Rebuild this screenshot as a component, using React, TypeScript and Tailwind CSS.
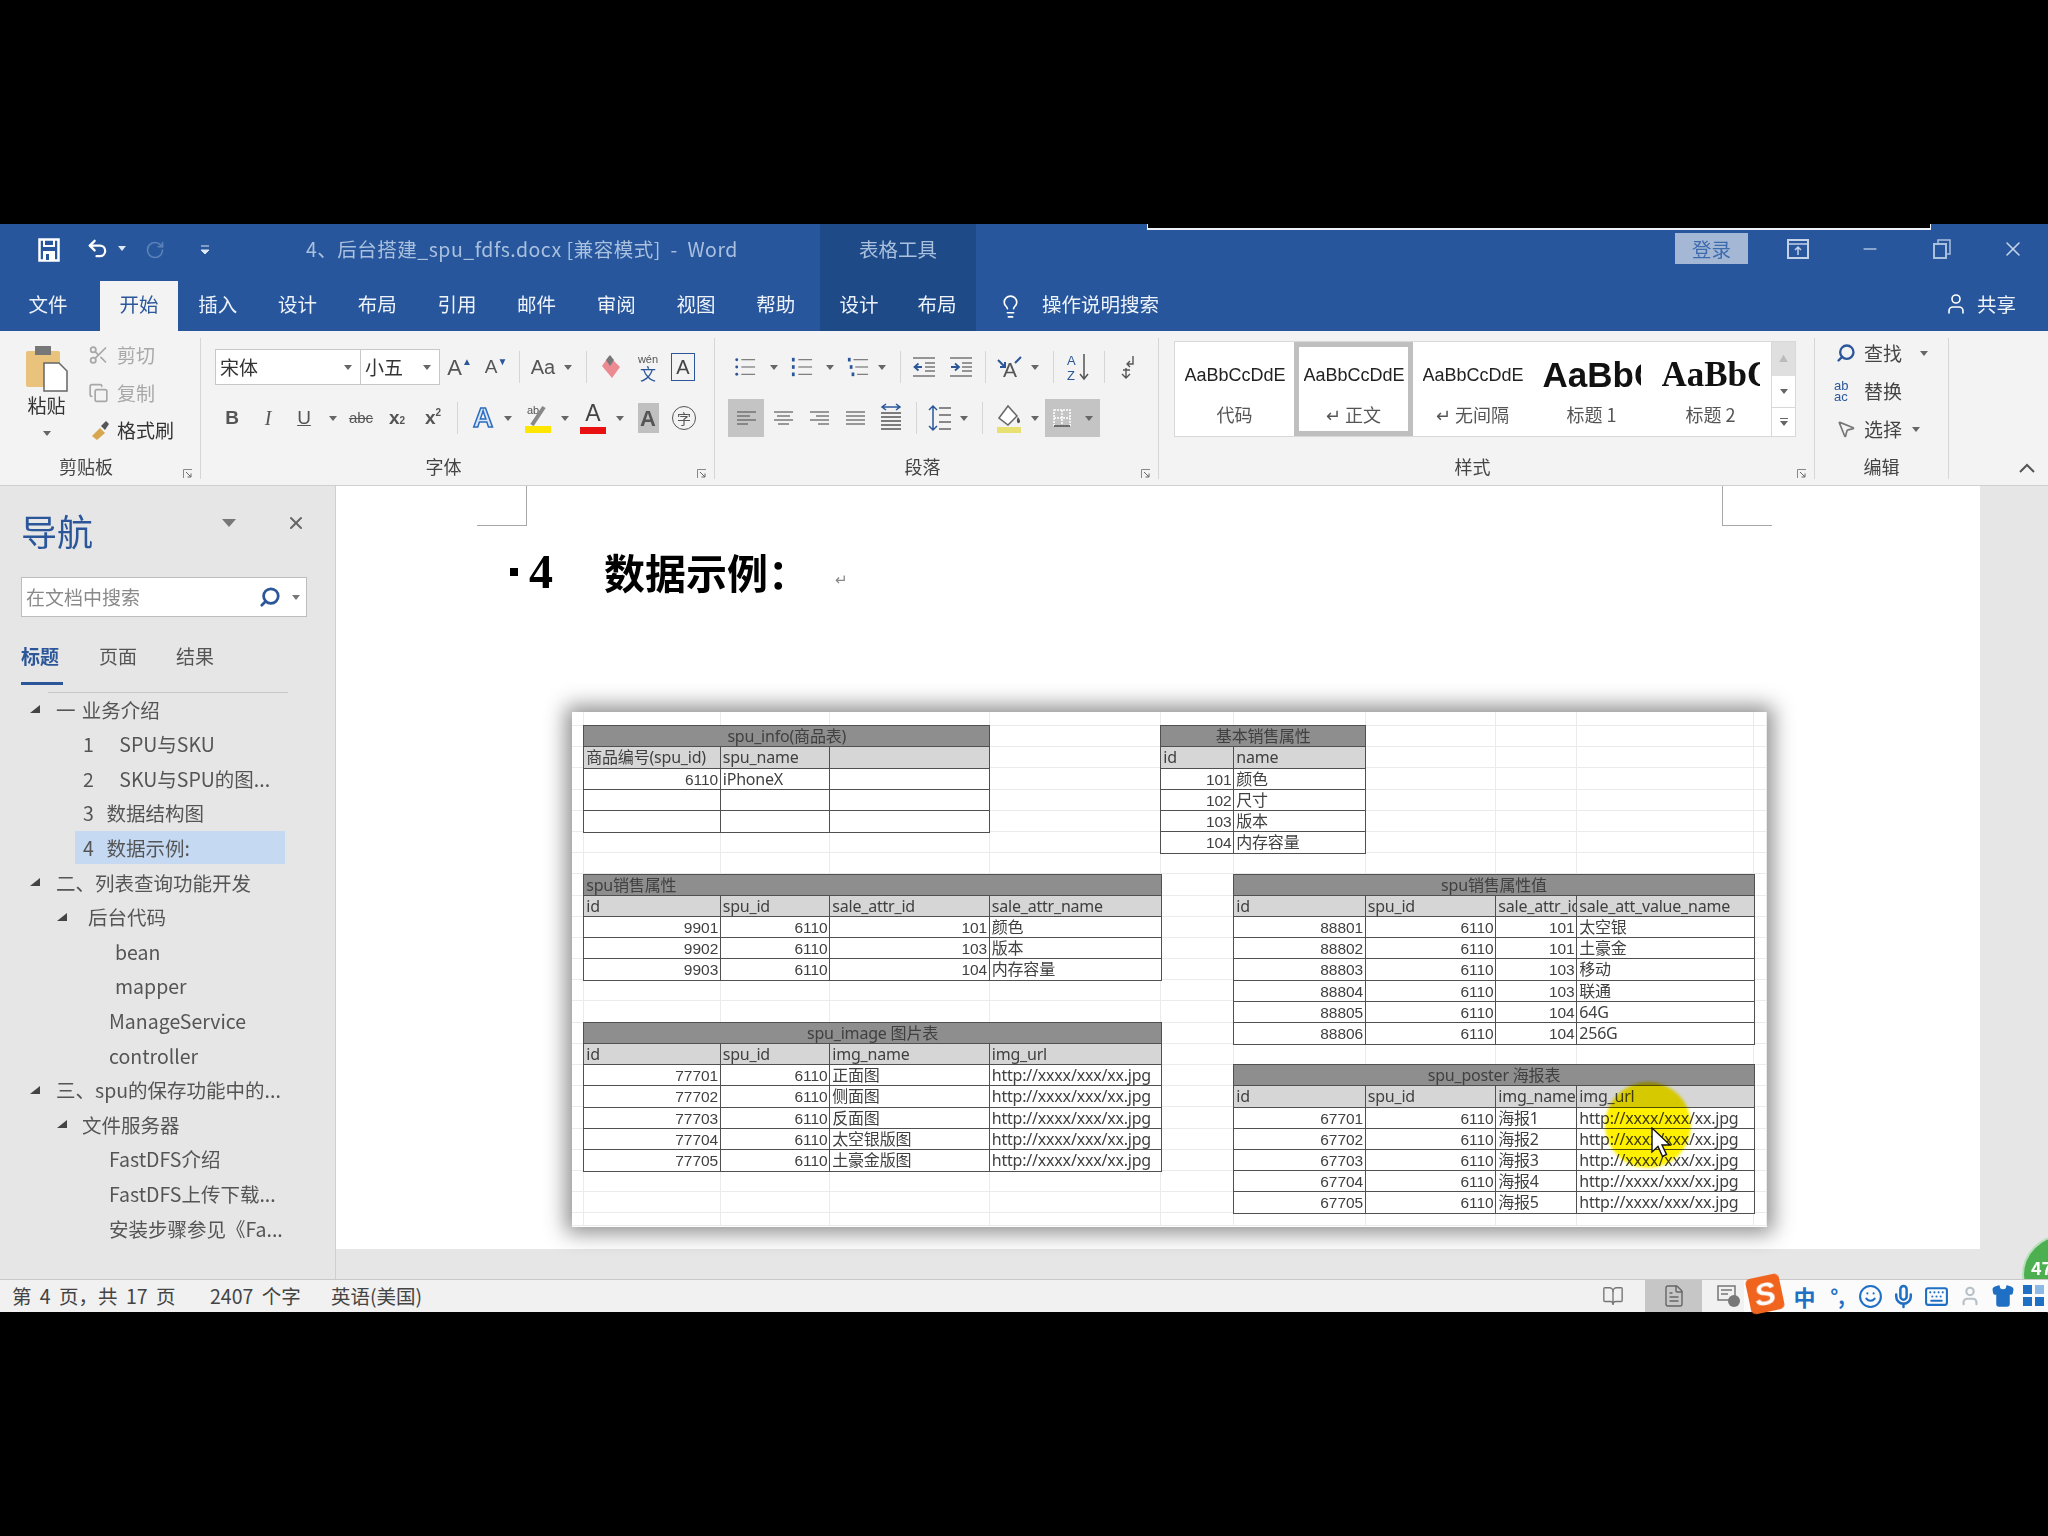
import React from "react";
import { BookOpen, Copy, FileText, Keyboard, Lightbulb, Mic, Minus, MousePointer2, RotateCw, Scissors, Search, Shirt, Smile, Undo2, User, X } from "lucide-react";

const S = ({ c = "", children }: { c?: string; children?: React.ReactNode }) => (
  <div className={"flex items-center justify-center shrink-0 h-full " + c}>{children}</div>
);
const Caret = ({ color = "#666" }: { color?: string }) => (
  <svg width="8" height="5" viewBox="0 0 8 5" className="shrink-0"><path d="M0 0h8L4 5z" fill={color} /></svg>
);
const Sep = () => <div className="w-px h-[32px] bg-[#d6d6d6]" />;
const Launcher = () => (
  <svg width="10" height="10" viewBox="0 0 10 10" className="absolute right-[7px] bottom-[0px]">
    <path d="M0.5 9V0.5H9" fill="none" stroke="#888" />
    <path d="M3 3l5 5M8 4.5V8H4.5" fill="none" stroke="#666" />
  </svg>
);
const Group = ({ c, label, launcher = true, labelC = "pr-[28px]", bodyC = "", children }: { c: string; label: string; launcher?: boolean; labelC?: string; bodyC?: string; children: React.ReactNode }) => (
  <div className={"relative flex flex-col shrink-0 h-[141px] border-r border-[#d6d6d6] " + c}>
    <div className={"flex-1 min-h-0 " + bodyC}>{children}</div>
    <div className={"h-[20px] pb-[5px] flex items-center justify-center text-[18px] text-[#444] " + labelC}>{label}</div>
    {launcher && <Launcher />}
  </div>
);
const Lines = ({ kind }: { kind: "l" | "c" | "r" | "j" }) => {
  const ys = [2, 6, 10, 14];
  const geo: Record<string, [number, number][]> = {
    l: [[1, 20], [1, 14], [1, 20], [1, 12]],
    c: [[1, 20], [4, 17], [1, 20], [5, 16]],
    r: [[1, 20], [7, 20], [1, 20], [9, 20]],
    j: [[1, 20], [1, 20], [1, 20], [1, 20]],
  };
  return (
    <svg width="21" height="16" viewBox="0 0 21 16">
      {ys.map((y, i) => (
        <path key={y} d={`M${geo[kind][i][0]} ${y}H${geo[kind][i][1]}`} stroke="#666" strokeWidth="1.3" />
      ))}
    </svg>
  );
};
const ListIco = ({ n }: { n: number }) => (
  <svg width="22" height="24" viewBox="0 0 24 24">
    {[4, 12, 20].map((y, i) => (
      <g key={y}>
        {n === 0 ? <circle cx="3" cy={y} r="1.6" fill="#2b579a" /> : <rect x={n === 2 ? i * 2 + 1 : 1} y={y - 2} width="3" height="4" fill="#2b579a" />}
        <path d={`M${n === 2 ? i * 2 + 7 : 8} ${y}H23`} stroke="#777" strokeWidth="1.3" />
      </g>
    ))}
  </svg>
);
const Indent = ({ flip }: { flip?: boolean }) => (
  <svg width="24" height="22" viewBox="0 0 24 22">
    <path d="M1 2h22M13 7h10M13 11h10M13 15h10M1 20h22" stroke="#777" strokeWidth="1.4" />
    <path d={flip ? "M2 11h7M6 7.500l4 3.500-4 3.500" : "M10 11H3M6.500 7.500L2.500 11l4 3.500"} stroke="#2b579a" strokeWidth="1.8" fill="none" />
  </svg>
);

const SmallSample = () => (
  <div className="w-[100px] overflow-hidden whitespace-nowrap text-[18px] leading-[24px] text-[#222] font-['Liberation_Sans',sans-serif]">AaBbCcDdEe</div>
);
const StyleItem = ({ sample, label, selected }: { sample: React.ReactNode; label: string; selected?: boolean }) => (
  <div className={"w-[119px] h-full shrink-0 flex flex-col items-center " + (selected ? "border-[5px] border-[#bfbfbf]" : "border-[5px] border-transparent")}>
    <div className="h-[54px] mt-[1px] flex items-center justify-center">{sample}</div>
    <div className="h-[24px] flex items-center text-[18px] text-[#555]">{label}</div>
  </div>
);

type Tbl = { col: number; row: number; title: string; left?: boolean; span: number; header: string[]; rows: string[][] };
const url = "http://xxxx/xxx/xx.jpg";
const tables: Tbl[] = [
  { col: 2, row: 2, span: 3, title: "spu_info(商品表)", header: ["商品编号(spu_id)", "spu_name", ""], rows: [["6110", "iPhoneX", ""], ["", "", ""], ["", "", ""]] },
  { col: 6, row: 2, span: 2, title: "基本销售属性", header: ["id", "name"], rows: [["101", "颜色"], ["102", "尺寸"], ["103", "版本"], ["104", "内存容量"]] },
  { col: 2, row: 9, span: 4, left: true, title: "spu销售属性", header: ["id", "spu_id", "sale_attr_id", "sale_attr_name"], rows: [["9901", "6110", "101", "颜色"], ["9902", "6110", "103", "版本"], ["9903", "6110", "104", "内存容量"]] },
  { col: 7, row: 9, span: 4, title: "spu销售属性值", header: ["id", "spu_id", "sale_attr_id", "sale_att_value_name"], rows: [["88801", "6110", "101", "太空银"], ["88802", "6110", "101", "土豪金"], ["88803", "6110", "103", "移动"], ["88804", "6110", "103", "联通"], ["88805", "6110", "104", "64G"], ["88806", "6110", "104", "256G"]] },
  { col: 2, row: 16, span: 4, title: "spu_image 图片表", header: ["id", "spu_id", "img_name", "img_url"], rows: [["77701", "6110", "正面图", url], ["77702", "6110", "侧面图", url], ["77703", "6110", "反面图", url], ["77704", "6110", "太空银版图", url], ["77705", "6110", "土豪金版图", url]] },
  { col: 7, row: 18, span: 4, title: "spu_poster 海报表", header: ["id", "spu_id", "img_name", "img_url"], rows: [["67701", "6110", "海报1", url], ["67702", "6110", "海报2", url], ["67703", "6110", "海报3", url], ["67704", "6110", "海报4", url], ["67705", "6110", "海报5", url]] },
];
const cellBase = "m-[-0.750px] border-[1.500px] border-[#505050] overflow-hidden whitespace-nowrap pt-[1px] leading-[19px] text-[#404040] ";
const textCell = "text-[16px] font-['Noto_Sans','Noto_Sans_CJK_SC',sans-serif] tracking-[-0.200px] ";
const numCell = "text-[15.500px] font-['Liberation_Sans',sans-serif] text-right pr-[2px] ";

const Sheet = () => {
  const bg: React.ReactNode[] = [];
  for (let r = 1; r <= 25; r++) for (let c = 1; c <= 11; c++)
    bg.push(<div key={r + "-" + c} className="border-b border-r border-[#ebebeb]" style={{ gridRow: r, gridColumn: c }} />);
  return (
    <div className="relative ml-[236px] mt-[110px] w-[1195px] h-[515px] bg-white shadow-[0_0_20px_6px_rgba(0,0,0,0.45)] grid grid-cols-[12px_136.500px_109.500px_159.500px_171.500px_73px_131.500px_130.500px_81px_177px_13px] grid-rows-[14px_repeat(23,21.200px)_13px]">
      {bg}
      {tables.map((t) => (
        <React.Fragment key={t.title}>
          <div className={cellBase + textCell + "bg-[#8e8e8e] px-[2px] " + (t.left ? "text-left" : "text-center")} style={{ gridRow: t.row, gridColumn: `${t.col} / span ${t.span}` }}>{t.title}</div>
          {t.header.map((h, i) => (
            <div key={i} className={cellBase + textCell + "bg-[#d6d6d6] pl-[2px]"} style={{ gridRow: t.row + 1, gridColumn: t.col + i }}>{h}</div>
          ))}
          {t.rows.map((row, ri) => row.map((v, i) => (
            <div key={ri + "-" + i} className={cellBase + "bg-white " + (/^\d+$/.test(v) ? numCell : textCell + "pl-[2px]")} style={{ gridRow: t.row + 2 + ri, gridColumn: t.col + i }}>{v}</div>
          )))}
        </React.Fragment>
      ))}
      <div className="absolute left-[1033px] top-[370px] w-[86px] h-[86px] rounded-full bg-[#fff000] mix-blend-multiply blur-[1.500px]" />
      <svg className="absolute left-[1078px] top-[415px]" width="22" height="32" viewBox="0 0 22 32">
        <path d="M2 1v24l6-5.500 4.500 10 4-2-4.500-9.500h8z" fill="#fff" stroke="#111" strokeWidth="1.400" />
      </svg>
    </div>
  );
};

const tree: { pl: string; tri?: string; text: string; sel?: boolean }[] = [
  { pl: "pl-[29px]", tri: "ml-[15px]", text: "一 业务介绍" },
  { pl: "pl-[83px]", text: "1    SPU与SKU" },
  { pl: "pl-[83px]", text: "2    SKU与SPU的图..." },
  { pl: "pl-[83px]", text: "3  数据结构图" },
  { pl: "pl-[83px]", text: "4  数据示例:", sel: true },
  { pl: "pl-[29px]", tri: "ml-[15px]", text: "二、列表查询功能开发" },
  { pl: "pl-[56px]", tri: "ml-[20px]", text: "后台代码" },
  { pl: "pl-[115px]", text: "bean" },
  { pl: "pl-[115px]", text: "mapper" },
  { pl: "pl-[109px]", text: "ManageService" },
  { pl: "pl-[109px]", text: "controller" },
  { pl: "pl-[29px]", tri: "ml-[15px]", text: "三、spu的保存功能中的..." },
  { pl: "pl-[56px]", tri: "ml-[14px]", text: "文件服务器" },
  { pl: "pl-[109px]", text: "FastDFS介绍" },
  { pl: "pl-[109px]", text: "FastDFS上传下载..." },
  { pl: "pl-[109px]", text: "安装步骤参见《Fa..." },
];

const Tri = () => (
  <svg width="12" height="10" viewBox="0 0 12 10" className="shrink-0"><path d="M11 1v8H1z" fill="#444" /></svg>
);

const NavPane = () => (
  <div className="w-[336px] shrink-0 border-r border-[#cfcfcf] bg-[#e6e6e6] flex flex-col">
    <div className="mt-[22px] h-[44px] pl-[21px] flex items-center">
      <div className="text-[36px] leading-[44px] text-[#2b579a]">导航</div>
      <div className="ml-[129px] mb-[14px]"><svg width="14" height="8" viewBox="0 0 14 8"><path d="M0 0h14L7 8z" fill="#777" /></svg></div>
      <X size={20} strokeWidth={2.4} className="ml-[50px] mb-[14px] text-[#666]" />
    </div>
    <div className="mt-[25px] ml-[21px] w-[286px] h-[40px] bg-white border border-[#bdbdbd] flex items-center pl-[4px]">
      <div className="text-[19px] text-[#8a8a8a]">在文档中搜索</div>
      <Search size={22} strokeWidth={3} className="ml-[119px] text-[#2b579a] -scale-x-100" />
      <div className="ml-[11px]"><Caret color="#777" /></div>
    </div>
    <div className="mt-[19px] pl-[21px] flex text-[19px] text-[#555]">
      <div className="w-[78px]">
        <div className="h-[40px] flex items-center text-[#2b579a] font-bold">标题</div>
        <div className="mt-[6px] w-[42px] h-[3px] bg-[#2b579a]" />
      </div>
      <div className="w-[77px] h-[40px] flex items-center">页面</div>
      <div className="h-[40px] flex items-center">结果</div>
    </div>
    <div className="mt-[7px] ml-[48px] w-[240px] h-px bg-[#c8c8c8]" />
    <div className="flex flex-col -mt-[1px]">
      {tree.map((t) => (
        <div key={t.text} className={"relative h-[34.600px] flex items-center text-[19.500px] text-[#555] whitespace-pre [word-spacing:2px] " + t.pl}>
          {t.sel && <div className="absolute left-[75px] top-[1px] w-[210px] h-[33px] bg-[#c5d9f3]" />}
          {t.tri && <Tri />}
          <span className={"relative " + (t.tri ?? "")}>{t.text}</span>
        </div>
      ))}
    </div>
  </div>
);

export default function App() {
  return (
    <div className="w-[2048px] h-[1536px] bg-black overflow-hidden flex flex-col justify-center">
      <div className="relative h-[1088px] flex flex-col blur-[0.700px] font-['Noto_Sans_CJK_SC','Noto_Sans',sans-serif]">
        {/* title bar */}
        <div className="h-[57px] bg-[#27569c] flex text-[#a9c0de] text-[19.500px]">
          <div className="flex h-full pb-[8px] pl-[38px]">
            <S c="w-[22px] pt-[3px]"><svg width="22" height="24" viewBox="0 0 22 24"><path d="M1.500 1.500h19v21h-19z" fill="none" stroke="#fff" strokeWidth="2.500" /><path d="M6 2v6h10V2" fill="none" stroke="#fff" strokeWidth="2" /><rect x="5" y="13" width="12" height="9" fill="#fff" /><rect x="8" y="16" width="3" height="6" fill="#27569c" /></svg></S>
            <S c="w-[24px] ml-[25px]"><Undo2 size={23} strokeWidth={2.400} className="text-white" /></S>
            <S c="w-[12px] ml-[7px]"><Caret color="#dfe8f5" /></S>
            <S c="w-[24px] ml-[15px] pt-[3px]"><RotateCw size={20} className="text-[#5b82b8]" /></S>
            <S c="w-[12px] ml-[32px] pt-[3px]"><svg width="8" height="10" viewBox="0 0 8 10"><path d="M0 1h8M0 5h8L4 9z" stroke="#dfe8f5" fill="#dfe8f5" /></svg></S>
            <S c="ml-[95px] w-[514px] !justify-start whitespace-pre tracking-[0.500px]">4、后台搭建_spu_fdfs.docx [兼容模式]  -  Word</S>
          </div>
          <div className="w-[156px] h-full pb-[8px] bg-[#1f4a88] flex items-center justify-center">表格工具</div>
          <div className="ml-auto flex h-full">
            <div className="mt-[9px] w-[73px] h-[31px] bg-[#a4b8d6] text-[#3d6cae] flex items-center justify-center">登录</div>
            <S c="w-[72px] ml-[14px] pb-[8px]"><svg width="22" height="20" viewBox="0 0 22 20"><rect x="1" y="1" width="20" height="18" fill="none" stroke="#c3d2e7" strokeWidth="2" /><path d="M1 5h20M11 8v8M8 11l3-3 3 3" stroke="#c3d2e7" strokeWidth="1.500" fill="none" /></svg></S>
            <S c="w-[72px] pb-[8px]"><Minus size={20} className="text-[#a9c0de]" /></S>
            <S c="w-[72px] pb-[8px]"><svg width="18" height="20" viewBox="0 0 18 20"><rect x="1" y="5" width="12" height="14" fill="none" stroke="#a9c0de" strokeWidth="2" /><path d="M5 4V1h12v14h-3" fill="none" stroke="#a9c0de" strokeWidth="1.500" /></svg></S>
            <S c="w-[70px] pb-[8px]"><X size={24} strokeWidth={1.600} className="text-[#c3d2e7]" /></S>
          </div>
        </div>
        <div className="absolute left-[1147px] top-0 w-[784px] h-[6px] bg-black border-x border-b-2 border-[#eef2f8]" />
        {/* tabs */}
        <div className="h-[50px] bg-[#27569c] flex items-stretch text-[19.500px] text-[#eef3fa] pl-[8px]">
          <S c="w-[80px] pb-[4px]">文件</S>
          <S c="w-[78px] ml-[12px] pb-[4px] bg-[#f3f3f3] text-[#2b579a]">开始</S>
          {["插入", "设计", "布局", "引用", "邮件", "审阅", "视图", "帮助"].map((t) => (
            <S key={t} c="w-[79.700px] pb-[4px]">{t}</S>
          ))}
          <div className="ml-[4.400px] flex bg-[#1f4a88]">
            <S c="w-[78px] pb-[4px]">设计</S>
            <S c="w-[78px] pb-[4px]">布局</S>
          </div>
          <S c="w-[66px] pl-[3px]"><Lightbulb size={25} strokeWidth={1.600} className="text-white" /></S>
          <S c="pb-[4px]">操作说明搜索</S>
          <div className="ml-auto flex items-center pr-[32px] pb-[4px]">
            <User size={24} strokeWidth={1.600} className="text-white mr-[9px]" />
            <span>共享</span>
          </div>
        </div>
        {/* ribbon */}
        <div className="h-[155px] bg-[#f3f3f3] border-b border-[#cfcfcf] flex pt-[7px]">
          <Group c="w-[201px]" label="剪贴板" bodyC="flex">
            <div className="w-[88px] shrink-0 flex flex-col items-center pl-[5px] pt-[7px]">
              <svg width="44" height="48" viewBox="0 0 44 48">
                <rect x="1" y="6" width="34" height="36" rx="2" fill="#e9c27c" />
                <rect x="10" y="1" width="16" height="9" fill="#777" />
                <path d="M19 18h15l8 8v20H19z" fill="#fff" stroke="#666" strokeWidth="1.500" />
              </svg>
              <div className="h-[28px] leading-[24px] text-[19px] text-[#333]">粘贴</div>
              <div className="mt-[10px]"><Caret /></div>
            </div>
            <div className="flex flex-col text-[19px]">
              <div className="h-[34px] flex items-center text-[#a8a8a8]"><Scissors size={22} className="w-[21px] mr-[8px]" />剪切</div>
              <div className="mt-[2px] h-[38px] flex items-center text-[#a8a8a8]"><Copy size={20} className="w-[21px] mr-[8px]" />复制</div>
              <div className="h-[36px] flex items-center text-[#333]">
                <svg width="22" height="22" viewBox="0 0 22 22" className="mr-[7px]"><path d="M12 9l5 5-8 7-5-4z" fill="#d7a64e" /><path d="M13 7l5-5 3 3-4 6z" fill="#555" /></svg>
                格式刷
              </div>
            </div>
          </Group>

          <Group c="w-[514px]" label="字体" bodyC="pt-[11px]">
            <div className="h-[36px] flex pl-[14px]">
              <div className="w-[146px] h-[36px] bg-white border border-[#c8c8c8] flex items-center justify-between px-[4px] pr-[8px] text-[19px] text-[#333]">宋体<Caret /></div>
              <div className="w-[79px] h-[36px] bg-white border border-l-0 border-[#c8c8c8] flex items-center justify-between px-[4px] pr-[8px] text-[19px] text-[#333]">小五<Caret /></div>
              <div className="flex text-[#555] font-['Liberation_Sans',sans-serif]">
                <S c="w-[36px] pl-[3px] text-[22px]">A<span className="text-[10px] mb-[12px] text-[#2b579a]">▲</span></S>
                <S c="w-[38px] pl-[2px] text-[19px]">A<span className="text-[10px] mb-[12px] text-[#2b579a]">▼</span></S>
                <S c="w-[10px]"><Sep /></S>
                <S c="w-[38px] text-[20px]">Aa</S>
                <S c="w-[12px]"><Caret /></S>
                <S c="w-[24px]"><Sep /></S>
                <S c="w-[26px]"><svg width="22" height="26" viewBox="0 0 22 26"><path d="M2 12L9 2l11 11-8 11z" fill="#ec8a92" /><path d="M6 6l4-5 4 5-4 6z" fill="#777" /></svg></S>
                <S c="w-[48px] flex-col leading-none text-[#2b579a]"><span className="text-[11px] text-[#555]">wén</span><span className="text-[16px] font-['Noto_Sans_CJK_SC',sans-serif]">文</span></S>
                <S c="w-[22px]"><div className="w-[24px] h-[28px] border border-[#2b579a] flex items-center justify-center text-[20px] shrink-0 text-[#444]">A</div></S>
              </div>
            </div>
            <div className="mt-[14px] h-[38px] flex pl-[13px] text-[#555] font-['Liberation_Sans',sans-serif]">
              <S c="w-[36px] text-[19px] font-bold">B</S>
              <S c="w-[36px] text-[20px] italic font-['Liberation_Serif',serif]">I</S>
              <S c="w-[36px] text-[19px] underline">U</S>
              <S c="w-[22px]"><Caret /></S>
              <S c="w-[34px] text-[15px] line-through">abc</S>
              <S c="w-[38px] text-[19px] font-bold">x<sub className="text-[10px]">2</sub></S>
              <S c="w-[34px] text-[19px] font-bold">x<sup className="text-[10px]">2</sup></S>
              <S c="w-[14px]"><Sep /></S>
              <S c="w-[38px] text-[28px] text-[#dbe7f7] [-webkit-text-stroke:1.500px_#2b6cc0] font-bold">A</S>
              <S c="w-[12px]"><Caret /></S>
              <S c="w-[48px]"><div className="flex flex-col items-center"><svg width="24" height="22" viewBox="0 0 24 22"><text x="1" y="10" fontSize="11" fill="#555">ab</text><path d="M6 21L18 3" stroke="#888" strokeWidth="4" /></svg><div className="w-[26px] h-[7px] bg-[#ffe600]" /></div></S>
              <S c="w-[6px]"><Caret /></S>
              <S c="w-[50px]"><div className="flex flex-col items-center leading-none"><span className="text-[23px] text-[#444]">A</span><div className="w-[26px] h-[7px] bg-[#e81010] mt-[2px]" /></div></S>
              <S c="w-[4px]"><Caret /></S>
              <S c="w-[52px]"><div className="w-[21px] h-[30px] bg-[#c0c0c0] flex items-center justify-center text-[22px] font-bold shrink-0 text-[#555]">A</div></S>
              <S c="w-[20px]"><div className="w-[24px] h-[24px] shrink-0 rounded-full border border-[#555] flex items-center justify-center text-[14px] font-['Noto_Sans_CJK_SC',sans-serif]">字</div></S>
            </div>
          </Group>

          <Group c="w-[444px]" label="段落" bodyC="pt-[11px]">
            <div className="h-[36px] flex pl-[10px]">
              <S c="w-[40px]"><ListIco n={0} /></S>
              <S c="w-[18px]"><Caret /></S>
              <S c="w-[38px]"><ListIco n={1} /></S>
              <S c="w-[18px]"><Caret /></S>
              <S c="w-[38px]"><ListIco n={2} /></S>
              <S c="w-[10px]"><Caret /></S>
              <S c="w-[12px] ml-[7px]"><Sep /></S>
              <S c="w-[36px]"><Indent /></S>
              <S c="w-[38px]"><Indent flip /></S>
              <S c="w-[10px]"><Sep /></S>
              <S c="w-[40px]"><svg width="30" height="26" viewBox="0 0 30 26"><text x="8" y="23" fontSize="21" fill="#555" fontFamily="Liberation Sans">A</text><path d="M3 6l7 7M5 13h5V8" stroke="#2b579a" strokeWidth="2" fill="none" /><path d="M26 3l-6 6" stroke="#2b579a" strokeWidth="2" /></svg></S>
              <S c="w-[10px]"><Caret /></S>
              <S c="w-[26px]"><Sep /></S>
              <S c="w-[26px]"><svg width="24" height="30" viewBox="0 0 24 30"><text x="0" y="13" fontSize="13" fill="#2b579a" fontFamily="Liberation Sans">A</text><text x="0" y="28" fontSize="13" fill="#2b579a" fontFamily="Liberation Sans">Z</text><path d="M17 2v24M13 22l4 5 4-5" stroke="#555" strokeWidth="1.500" fill="none" /></svg></S>
              <S c="w-[24px]"><Sep /></S>
              <S c="w-[24px]"><svg width="20" height="26" viewBox="0 0 20 26"><path d="M15 2v8h-5M12 7l-3 3 3 3M8 14v9M5 16h7M4 20l4 4 4-4" stroke="#555" strokeWidth="1.400" fill="none" /></svg></S>
            </div>
            <div className="mt-[14px] h-[38px] flex pl-[13px]">
              <S c="w-[36px] bg-[#c4c4c4]"><Lines kind="l" /></S>
              <S c="w-[38px]"><Lines kind="c" /></S>
              <S c="w-[34px]"><Lines kind="r" /></S>
              <S c="w-[38px]"><Lines kind="j" /></S>
              <S c="w-[34px]"><svg width="24" height="30" viewBox="0 0 24 30"><path d="M2 10h20M2 14h20M2 18h20M2 22h20M2 26h20" stroke="#555" strokeWidth="1.400" /><path d="M4 4h16M7 1L3 4l4 3M17 1l4 3-4 3" stroke="#2b579a" strokeWidth="1.500" fill="none" /></svg></S>
              <S c="w-[16px]"><Sep /></S>
              <S c="w-[32px]"><svg width="24" height="28" viewBox="0 0 24 28"><path d="M11 4h12M11 11h12M11 18h12M11 25h12" stroke="#666" strokeWidth="1.500" /><path d="M5 2v24M1 6l4-4 4 4M1 22l4 4 4-4" stroke="#2b579a" strokeWidth="1.500" fill="none" /></svg></S>
              <S c="w-[16px]"><Caret /></S>
              <S c="w-[20px]"><Sep /></S>
              <S c="w-[34px]"><svg width="26" height="30" viewBox="0 0 26 30"><path d="M3 15l9-12 9 10-9 9z" fill="#fff" stroke="#666" strokeWidth="1.500" /><path d="M22 14c2 3 3 5 1 6s-3-3-1-6z" fill="#555" /><rect x="1" y="24" width="24" height="6" fill="#e8e070" /></svg></S>
              <S c="w-[18px]"><Caret /></S>
              <S c="w-[55px] ml-[1px] bg-[#c4c4c4] gap-[14px]"><svg width="18" height="18" viewBox="0 0 18 18"><path d="M1 1h16v16H1zM9 1v16M1 9h16" stroke="#fff" strokeWidth="1.500" strokeDasharray="2 1" fill="none" /><path d="M1 17h16" stroke="#444" strokeWidth="1.500" /></svg><Caret /></S>
            </div>
          </Group>

          <Group c="w-[656px]" label="样式" bodyC="pt-[3px]">
            <div className="ml-[15px] w-[622px] h-[96px] bg-white border border-[#d8d8d8] flex">
              <StyleItem sample={<SmallSample />} label="代码" />
              <StyleItem selected sample={<SmallSample />} label="↵ 正文" />
              <StyleItem sample={<SmallSample />} label="↵ 无间隔" />
              <StyleItem sample={<div className="w-[98px] overflow-hidden whitespace-nowrap text-[35px] font-bold leading-[44px] text-[#111] font-['Liberation_Sans',sans-serif]">AaBbCc</div>} label="标题 1" />
              <StyleItem sample={<div className="w-[98px] overflow-hidden whitespace-nowrap text-[35px] font-bold leading-[44px] text-[#111] font-['Liberation_Serif',serif]">AaBbCc</div>} label="标题 2" />
              <div className="ml-auto w-[24px] flex flex-col border-l border-[#d8d8d8]">
                <div className="h-[34px] bg-[#dfdfdf] flex items-center justify-center text-[9px] text-[#bbb]">▲</div>
                <div className="h-[32px] flex items-center justify-center border-b border-[#d8d8d8]"><Caret /></div>
                <div className="flex-1 flex flex-col gap-[2px] items-center justify-center"><div className="w-[8px] h-px bg-[#666]" /><Caret /></div>
              </div>
            </div>
          </Group>

          <Group c="w-[134px]" label="编辑" launcher={false} labelC="" bodyC="text-[19px] text-[#444]">
            <div className="h-[30px] flex items-center pl-[21px]"><Search size={20} strokeWidth={2.800} className="text-[#2b579a] -scale-x-100 mr-[8px]" />查找<span className="ml-[18px]"><Caret /></span></div>
            <div className="mt-[4px] h-[38px] flex items-center pl-[19px]"><div className="w-[26px] mr-[4px] flex flex-col leading-[11px] text-[13px] text-[#2b579a] font-['Liberation_Sans',sans-serif]"><span>ab</span><span>ac</span></div>替换</div>
            <div className="h-[38px] flex items-center pl-[21px]"><MousePointer2 size={20} className="text-[#777] mr-[8px]" />选择<span className="ml-[10px]"><Caret /></span></div>
          </Group>

          <div className="flex-1 flex items-end justify-end pr-[13px] pb-[12px]">
            <svg width="16" height="10" viewBox="0 0 16 10"><path d="M1 9l7-7 7 7" fill="none" stroke="#555" strokeWidth="2" /></svg>
          </div>
        </div>
        {/* body */}
        <div className="flex-1 min-h-0 flex bg-[#e6e6e6]">
          <NavPane />
          <div className="w-[1644px] h-[763px] shrink-0 bg-white relative pt-[56px]">
            <div className="absolute left-[141px] top-0 w-[50px] h-[40px] border-r border-b border-[#a8a8a8]" />
            <div className="absolute left-[1386px] top-0 w-[50px] h-[40px] border-l border-b border-[#a8a8a8]" />
            <div className="h-[60px] pl-[174px] flex items-center text-black font-semibold">
              <div className="w-[8px] h-[8px] bg-black" />
              <div className="ml-[11px] w-[75px] text-[48px] font-bold font-['Liberation_Serif',serif]">4</div>
              <div className="text-[41px]">数据示例：</div>
              <div className="ml-[26px] mt-[14px] text-[15px] font-normal text-[#888]">↵</div>
            </div>
            <Sheet />
          </div>
          <div className="flex-1 relative">
            <div className="absolute left-[42px] top-[749px] w-[80px] h-[80px] rounded-full bg-[#4caf50] border-2 border-[#b7e0b8] flex pl-[7px] pt-[17px] text-[18px] font-bold text-white">47</div>
          </div>
        </div>
        {/* status */}
        <div className="relative h-[33px] bg-[#f1f1f1] border-t border-[#c8c8c8] flex items-center text-[19.500px] text-[#444] [word-spacing:4px]">
          <div className="ml-[12px] w-[198px] whitespace-pre">第 4 页，共 17 页</div>
          <div className="w-[121px]">2407 个字</div>
          <div>英语(美国)</div>
          <div className="ml-auto h-full flex">
            <S c="w-[36px]"><BookOpen size={22} strokeWidth={1.500} className="text-[#777]" /></S>
            <S c="w-[57px] ml-[14px] bg-[#c6c6c6]"><FileText size={24} strokeWidth={1.400} className="text-[#666]" /></S>
            <S c="w-[42px] pl-[12px]"><svg width="24" height="22" viewBox="0 0 24 22"><path d="M1 1h17v14H1zM4 5h11M4 9h7" fill="none" stroke="#777" strokeWidth="1.500" /><circle cx="17" cy="16" r="6" fill="#777" /></svg></S>
            <div className="w-[304px] h-full shrink-0 bg-[#fbfbfb] flex text-[#1f6fc4] relative">
              <S c="w-[44px] !justify-start"><div className="w-[34px] h-[36px] -mt-[4px] ml-[4px] bg-[#f0641e] rounded-[5px] -rotate-12 flex items-center justify-center text-white text-[32px] font-black italic font-['Liberation_Sans',sans-serif] shrink-0">S</div></S>
              <S c="w-[33px] text-[22px] font-bold">中</S>
              <S c="w-[33px] text-[20px] font-bold">°,</S>
              <S c="w-[33px]"><Smile size={25} strokeWidth={2} /></S>
              <S c="w-[33px]"><Mic size={25} strokeWidth={2.400} /></S>
              <S c="w-[33px]"><Keyboard size={25} strokeWidth={2} /></S>
              <S c="w-[33px]"><User size={22} strokeWidth={2.400} className="text-[#b8c0c8]" /></S>
              <S c="w-[33px]"><Shirt size={24} fill="#1f6fc4" strokeWidth={1.500} /></S>
              <S c="w-[29px]"><svg width="22" height="22" viewBox="0 0 22 22" fill="#1f6fc4"><rect x="0" y="0" width="9" height="9" /><rect x="12" y="0" width="9" height="9" fill="#8db9e6" /><rect x="0" y="12" width="9" height="9" /><rect x="12" y="12" width="9" height="9" /></svg></S>
            </div>
          </div>
        </div>
      </div>
    </div>
  );
}
